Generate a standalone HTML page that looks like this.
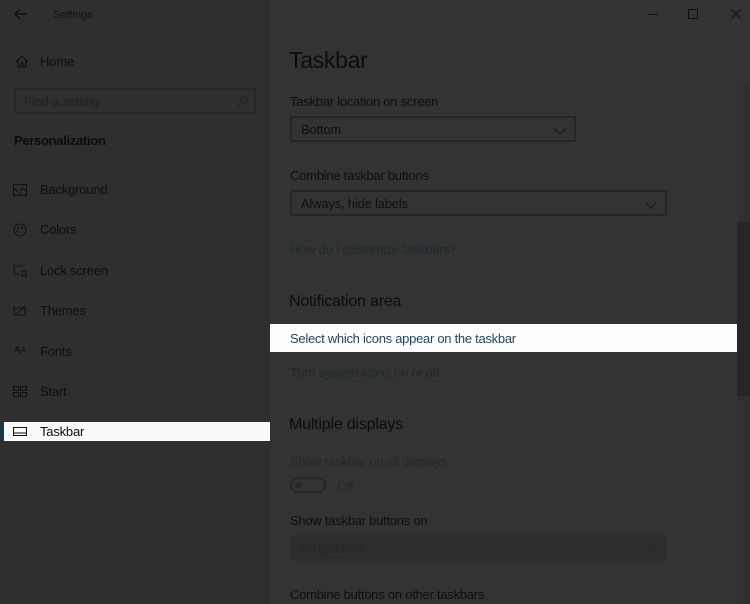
<!DOCTYPE html><html><head><style>
body{margin:0;width:750px;height:604px;overflow:hidden;background:#333;font-family:"Liberation Sans",sans-serif;position:relative;color:#0c0c0c}
.a{position:absolute;white-space:nowrap}
#left{position:absolute;left:0;top:0;width:270px;height:604px;background:#2f2f2f}
.nav{font-size:13px;color:#0e0e0e;letter-spacing:-0.2px}
.ic{position:absolute;left:13px;width:14px;height:12px}
.dd{position:absolute;border:2px solid #262626;box-sizing:border-box;height:26px;font-size:13px;color:#0e0e0e;padding:4px 0 0 9px;letter-spacing:-0.2px}
.chev{position:absolute;right:10px;top:7px;width:7px;height:7px;border-right:1px solid #151515;border-bottom:1px solid #151515;transform:rotate(45deg)}
.lbl{font-size:13px;color:#0e0e0e;letter-spacing:-0.25px}
.link{font-size:13px;color:#1a2a33;letter-spacing:-0.25px}
</style></head><body>
<div id="left"></div>
<svg class="a" style="left:14px;top:8px" width="14" height="12"><path d="M1 6H13M1 6L6 1M1 6L6 11" stroke="#0a0a0a" fill="none" stroke-width="1.2"/></svg>
<div class="a" style="left:53px;top:9px;font-size:11px;color:#111">Settings</div>
<svg class="a" style="left:15px;top:55px" width="14" height="13"><path d="M1 7L7 1L13 7M3 5V12H6V8H8V12H11V5" stroke="#0a0a0a" fill="none"/></svg>
<div class="a nav" style="left:40px;top:54px">Home</div>
<div class="a" style="left:14px;top:88px;width:242px;height:26px;border:2px solid #262626;box-sizing:border-box"></div>
<div class="a" style="left:24px;top:94px;font-size:13px;color:#202020;letter-spacing:-0.2px">Find a setting</div>
<svg class="a" style="left:237px;top:95px" width="12" height="12"><circle cx="7" cy="4.5" r="3.5" stroke="#202020" fill="none"/><path d="M4.5 7L1 11" stroke="#202020"/></svg>
<div class="a" style="left:14px;top:133px;font-size:13px;font-weight:bold;color:#0c0c0c;letter-spacing:-0.3px">Personalization</div>
<svg class="ic" style="top:184px" viewBox="0 0 14 12"><rect x=".5" y=".5" width="13" height="11" fill="none" stroke="#111"/><path d="M1 4L8 11M7 7L10 4L13 7" stroke="#111" fill="none"/></svg>
<div class="a nav" style="left:40px;top:182px">Background</div>
<svg class="ic" style="top:223px;height:14px" viewBox="0 0 14 14"><circle cx="7" cy="7" r="6" fill="none" stroke="#111"/><circle cx="5" cy="5" r="1" fill="#111"/><circle cx="9" cy="5" r="1" fill="#111"/><circle cx="4" cy="8.5" r="1" fill="#111"/></svg>
<div class="a nav" style="left:40px;top:222px">Colors</div>
<svg class="ic" style="top:265px" viewBox="0 0 14 12"><path d="M10 1H1V9H7" stroke="#111" fill="none"/><rect x="9" y="6" width="4" height="5" fill="none" stroke="#111"/></svg>
<div class="a nav" style="left:40px;top:263px">Lock screen</div>
<svg class="ic" style="top:305px" viewBox="0 0 14 12"><rect x="1" y="3" width="11" height="7" fill="none" stroke="#111"/><path d="M4 8L12 1" stroke="#111"/></svg>
<div class="a nav" style="left:40px;top:303px">Themes</div>
<div class="a" style="left:14px;top:345px;font-size:10px;color:#111">A<span style="font-size:8px">A</span></div>
<div class="a nav" style="left:40px;top:344px">Fonts</div>
<svg class="ic" style="top:386px" viewBox="0 0 14 12"><rect x=".5" y=".5" width="5" height="4" fill="none" stroke="#111"/><rect x="7.5" y=".5" width="6" height="4" fill="none" stroke="#111"/><rect x=".5" y="6.5" width="5" height="4" fill="none" stroke="#111"/><rect x="7.5" y="6.5" width="6" height="4" fill="none" stroke="#111"/></svg>
<div class="a nav" style="left:40px;top:384px">Start</div>
<div class="a" style="left:4px;top:422px;width:266px;height:19px;background:#fafafa"></div>
<div class="a" style="left:0;top:422px;width:4px;height:19px;background:#1c3646"></div>
<svg class="ic" style="top:426px" viewBox="0 0 14 12"><rect x=".5" y="1.5" width="13" height="8" fill="none" stroke="#111"/><path d="M1 7H13" stroke="#111"/></svg>
<div class="a nav" style="left:40px;top:424px">Taskbar</div>

<div class="a" style="left:648px;top:14px;width:10px;height:1px;background:#111"></div>
<div class="a" style="left:688px;top:9px;width:8px;height:8px;border:1px solid #111"></div>
<svg class="a" style="left:731px;top:9px" width="10" height="10"><path d="M0 0L10 10M10 0L0 10" stroke="#111"/></svg>

<div class="a" style="left:289px;top:47px;font-size:23px;color:#0c0c0c;letter-spacing:-0.3px">Taskbar</div>
<div class="a lbl" style="left:290px;top:94px">Taskbar location on screen</div>
<div class="dd" style="left:290px;top:116px;width:286px">Bottom<div class="chev"></div></div>
<div class="a lbl" style="left:290px;top:168px">Combine taskbar buttons</div>
<div class="dd" style="left:290px;top:190px;width:377px">Always, hide labels<div class="chev"></div></div>
<div class="a link" style="left:290px;top:242px">How do I customize taskbars?</div>
<div class="a" style="left:289px;top:293px;font-size:16px;color:#0c0c0c;letter-spacing:-0.2px">Notification area</div>
<div class="a" style="left:270px;top:324px;width:467px;height:28px;background:#fdfdfd"></div>
<div class="a" style="left:290px;top:331px;font-size:13px;color:#1e4662;letter-spacing:-0.28px">Select which icons appear on the taskbar</div>
<div class="a link" style="left:290px;top:365px">Turn system icons on or off</div>
<div class="a" style="left:289px;top:416px;font-size:16px;color:#0c0c0c;letter-spacing:-0.2px">Multiple displays</div>
<div class="a lbl" style="left:290px;top:454px;color:#272727">Show taskbar on all displays</div>
<div class="a" style="left:290px;top:477px;width:36px;height:16px;border:2px solid #272727;border-radius:10px;box-sizing:border-box"></div>
<div class="a" style="left:295px;top:482px;width:7px;height:7px;border-radius:50%;background:#272727"></div>
<div class="a lbl" style="left:337px;top:479px;color:#272727">Off</div>
<div class="a lbl" style="left:290px;top:513px">Show taskbar buttons on</div>
<div class="dd" style="left:290px;top:535px;width:377px;border:none;background:#2d2d2d;color:#262626;padding:6px 0 0 11px">All taskbars<div class="chev" style="border-color:#262626;top:6px"></div></div>
<div class="a lbl" style="left:290px;top:587px">Combine buttons on other taskbars</div>

<div class="a" style="left:737px;top:82px;width:13px;height:522px;background:#303030"></div>
<div class="a" style="left:737px;top:222px;width:13px;height:174px;background:#262626"></div>
</body></html>
